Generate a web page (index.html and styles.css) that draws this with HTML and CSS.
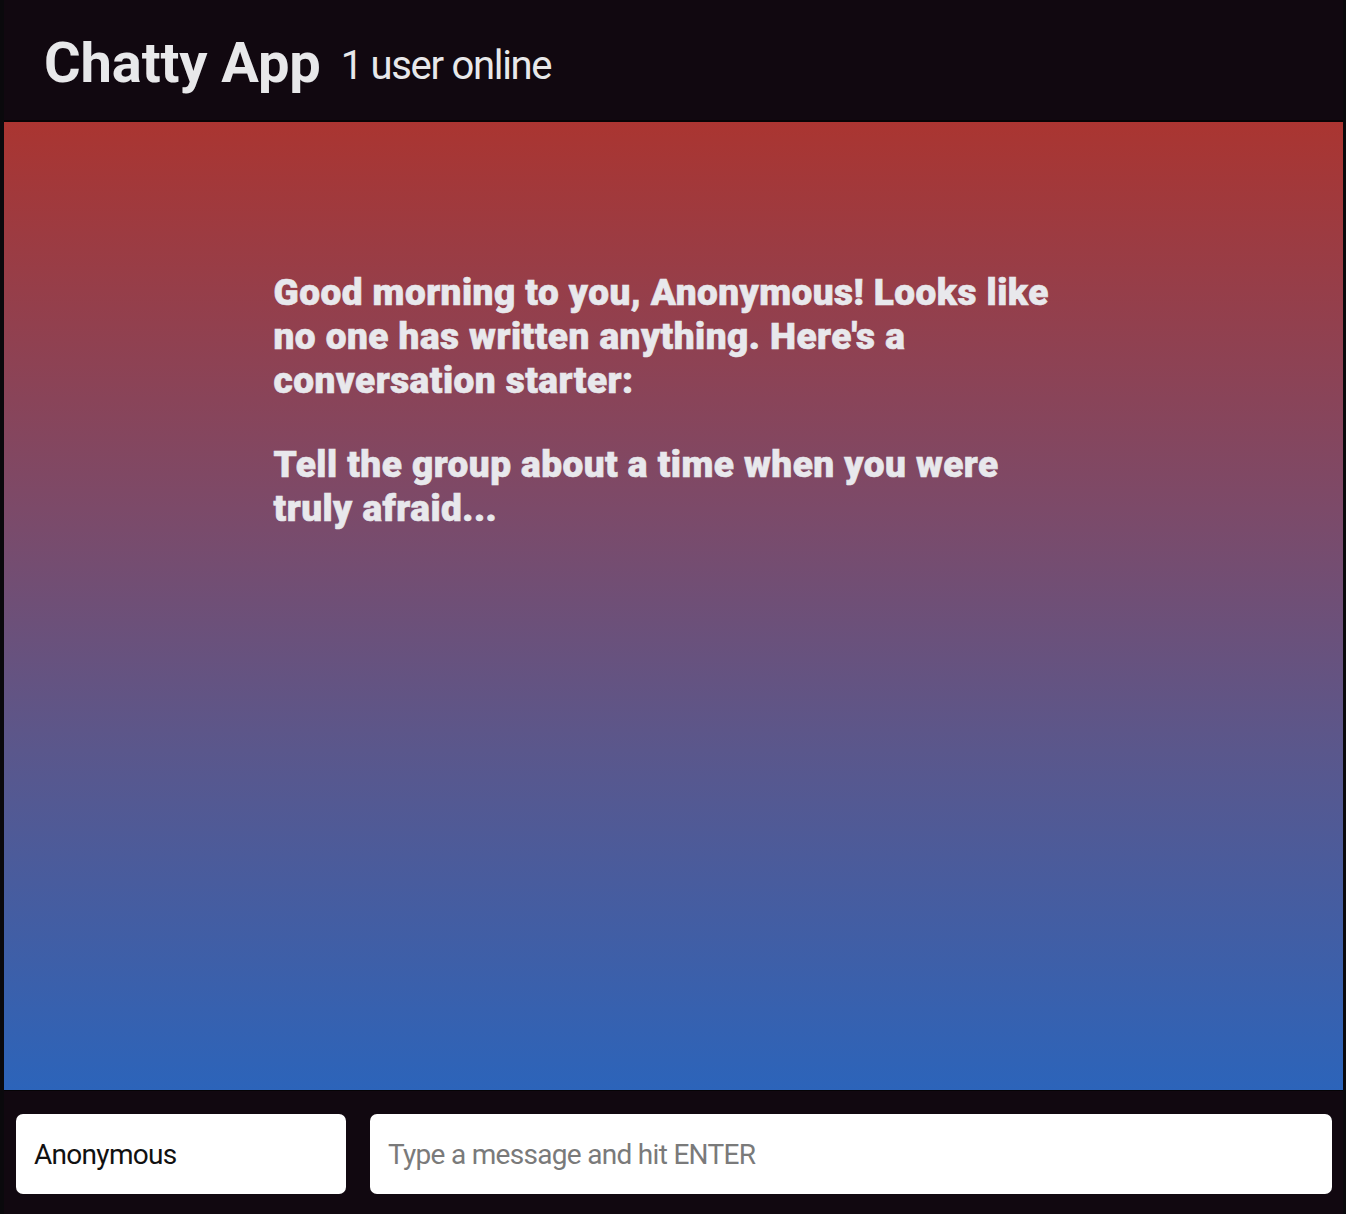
FILE: index.html
```html
<!DOCTYPE html>
<html lang="en">
<head>
<meta charset="utf-8">
<title>Chatty App</title>
<link rel="stylesheet" href="styles.css">
</head>
<body>
<div class="app">
  <nav class="navbar">
    <span class="brand">Chatty App</span>
    <span class="online">1 user online</span>
  </nav>
  <main class="messages">
    <div class="welcome">
      <p>Good morning to you, Anonymous! Looks like no one has written anything. Here's a conversation starter:</p>
      <p>Tell the group about a time when you were truly afraid...</p>
    </div>
  </main>
  <footer class="chatbar">
    <input class="chatbar-username" type="text" value="Anonymous">
    <input class="chatbar-message" type="text" placeholder="Type a message and hit ENTER">
  </footer>
</div>
</body>
</html>
```
FILE: styles.css
```css
html, body {
  margin: 0;
  padding: 0;
  height: 100%;
}
body {
  background: #0a090c;
  font-family: Roboto, "Noto Sans", sans-serif;
  overflow: hidden;
}
.app {
  margin: 0 3px 0 4px;
  height: 1214px;
  display: flex;
  flex-direction: column;
  background: #110810;
}
.navbar {
  flex: 0 0 122px;
  box-sizing: border-box;
  border-bottom: 2px solid #050305;
  display: flex;
  align-items: center;
  padding: 6px 0 0 40px;
  gap: 20px;
  color: #e8e8ea;
}
.brand {
  font-weight: 700;
  font-size: 56px;
  letter-spacing: -0.1px;
}
.online {
  font-size: 40px;
  font-weight: 400;
  letter-spacing: -1.3px;
  margin-top: 4px;
}
.messages {
  flex: 1 1 auto;
  background: linear-gradient(to bottom, #aa3531 0%, #7c4a69 40%, #5a578c 65%, #2c64ba 100%);
  border-bottom: 1px solid #050305;
  display: flex;
  justify-content: center;
}
.welcome {
  width: 800px;
  padding-top: 149px;
  color: #e8e8ec;
  font-weight: 900;
  font-size: 37px;
  line-height: 44px;
  letter-spacing: 0.45px;
  -webkit-text-stroke: 0.6px #e8e8ec;
}
.welcome p {
  margin: 0 0 40px;
}
.chatbar {
  flex: 0 0 123px;
  box-sizing: border-box;
  display: flex;
  align-items: flex-start;
  padding: 23px 11px 0 12px;
  gap: 24px;
}
.chatbar input {
  height: 80px;
  box-sizing: border-box;
  border: none;
  border-radius: 7px;
  background: #fff;
  font-family: Roboto, "Noto Sans", sans-serif;
  font-size: 28px;
  letter-spacing: -0.7px;
  padding: 0 18px;
  outline: none;
  color: #111;
}
.chatbar-username {
  flex: 0 0 330px;
  width: 330px;
}
.chatbar-message {
  flex: 1 1 auto;
  min-width: 0;
}
.chatbar-message::placeholder {
  color: #7a7a7a;
}
```
